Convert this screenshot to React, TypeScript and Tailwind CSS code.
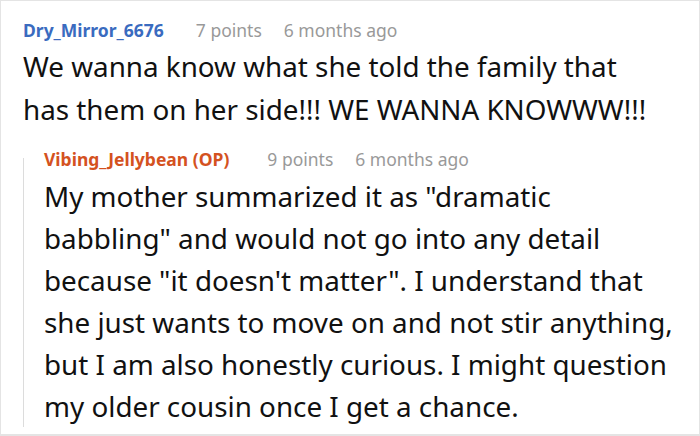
import React from "react";

const REPLY_TEXT =
  'My mother summarized it as "dramatic babbling" and would not go into any detail because "it doesn\'t matter". I understand that she just wants to move on and not stir anything, but I am also honestly curious. I might question my older cousin once I get a chance.';

function Meta({
  name,
  points,
  color,
  gap,
}: {
  name: string;
  points: string;
  color: string;
  gap: string;
}) {
  return (
    <div className="flex items-baseline text-[17.5px] leading-[24px]">
      <span className={`font-bold ${color}`}>{name}</span>
      <span className={`${gap} text-[#999]`}>{points}</span>
      <span className="ml-[22px] text-[#999]">6 months ago</span>
    </div>
  );
}

export default function App() {
  return (
    <div
      className="w-[700px] h-[436px] overflow-hidden border border-b-2 border-[#e4e4e4] bg-white pl-[22px] pr-[16px] pt-[17px] text-[#111]"
      style={{ fontFamily: '"Noto Sans", "Open Sans", sans-serif' }}
    >
      <Meta name="Dry_Mirror_6676" points="7 points" color="text-[#3a6bbf]" gap="ml-[32px]" />
      <p className="mt-[3px] max-w-[630px] text-[27.8px] leading-[43px]">
        We wanna know what she told the family that has them on her side!!! WE
        WANNA KNOWWW!!!
      </p>

      <div className="mt-[16px] flex">
        <div className="mt-[11px] w-px shrink-0 bg-[#dcdcdc]" />
        <div className="ml-[20px] flex-1">
          <Meta
            name="Vibing_Jellybean (OP)"
            points="9 points"
            color="text-[#d4521f]"
            gap="ml-[38px]"
          />
          <p className="mt-[4px] text-[27.8px] leading-[42px]">{REPLY_TEXT}</p>
        </div>
      </div>
    </div>
  );
}
